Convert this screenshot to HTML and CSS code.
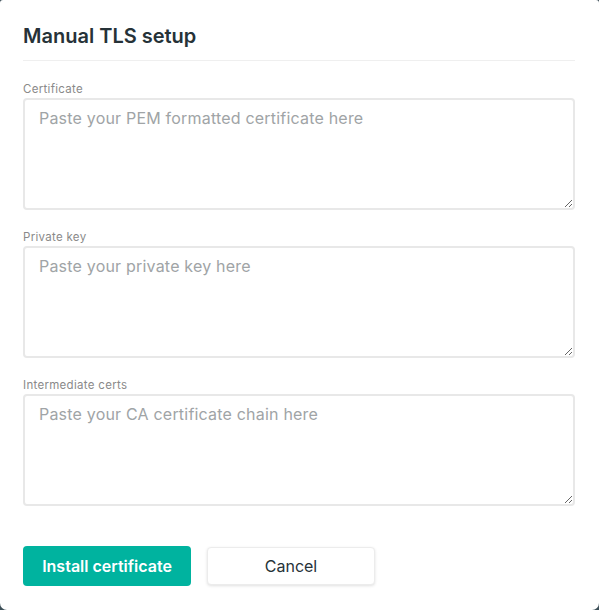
FILE: index.html
```html
<!DOCTYPE html>
<html>
<head>
<meta charset="utf-8">
<link rel="stylesheet" href="styles.css">
</head>
<body>
<div class="modal">
  <h1 class="title">Manual TLS setup</h1>
  <form class="form">
    <label class="field">
      <span class="label">Certificate</span>
      <textarea class="input" placeholder="Paste your PEM formatted certificate here"></textarea>
    </label>
    <label class="field">
      <span class="label">Private key</span>
      <textarea class="input" placeholder="Paste your private key here"></textarea>
    </label>
    <label class="field">
      <span class="label">Intermediate certs</span>
      <textarea class="input" placeholder="Paste your CA certificate chain here"></textarea>
    </label>
    <div class="actions">
      <button type="button" class="btn btn-primary">Install certificate</button>
      <button type="button" class="btn btn-secondary">Cancel</button>
    </div>
  </form>
</div>
</body>
</html>
```
FILE: styles.css
```css
* { box-sizing: border-box; }
html, body { margin: 0; padding: 0; }
body {
  background: #3d4f58;
  width: 599px;
  height: 610px;
  font-family: "Inter", "Liberation Sans", sans-serif;
  color: #263238;
}
.modal {
  width: 599px;
  height: 610px;
  background: #fff;
  border-radius: 3px 3px 7px 7px;
  padding: 0 24px 0 23px;
}
.title {
  margin: 0;
  padding-top: 24px;
  font-size: 20px;
  line-height: 25px;
  font-weight: 600;
  color: #263238;
  letter-spacing: 0;
  padding-bottom: 11px;
  border-bottom: 1px solid #efefef;
}
.form {
  display: flex;
  flex-direction: column;
  padding-top: 21px;
}
.field {
  display: flex;
  flex-direction: column;
  gap: 2px;
  margin-bottom: 20px;
}
.field:last-of-type { margin-bottom: 40px; }
.label {
  font-size: 11.5px;
  line-height: 14px;
  color: #8a8a8a;
  letter-spacing: 0.3px;
}
.input {
  height: 112px;
  width: 100%;
  border: 2px solid #e8e8e8;
  border-radius: 4px;
  padding: 7px 14px;
  font-family: inherit;
  font-size: 16px;
  line-height: 22px;
  letter-spacing: 0.2px;
  color: #263238;
  resize: vertical;
  outline: none;
}
.input::placeholder { color: #a0a4a6; }
.actions {
  display: flex;
  gap: 16px;
  align-items: center;
}
.btn {
  font-family: inherit;
  font-size: 16px;
  border-radius: 4px;
  cursor: pointer;
  padding: 0;
  white-space: nowrap;
}
.btn-primary {
  width: 168px;
  height: 40px;
  background: #00b39f;
  color: #fff;
  font-weight: 600;
  border: none;
}
.btn-secondary {
  width: 168px;
  height: 38px;
  background: #fff;
  color: #263238;
  border: 1px solid #ececec;
  box-shadow: 0 1px 3px rgba(0,0,0,0.12);
}
```
